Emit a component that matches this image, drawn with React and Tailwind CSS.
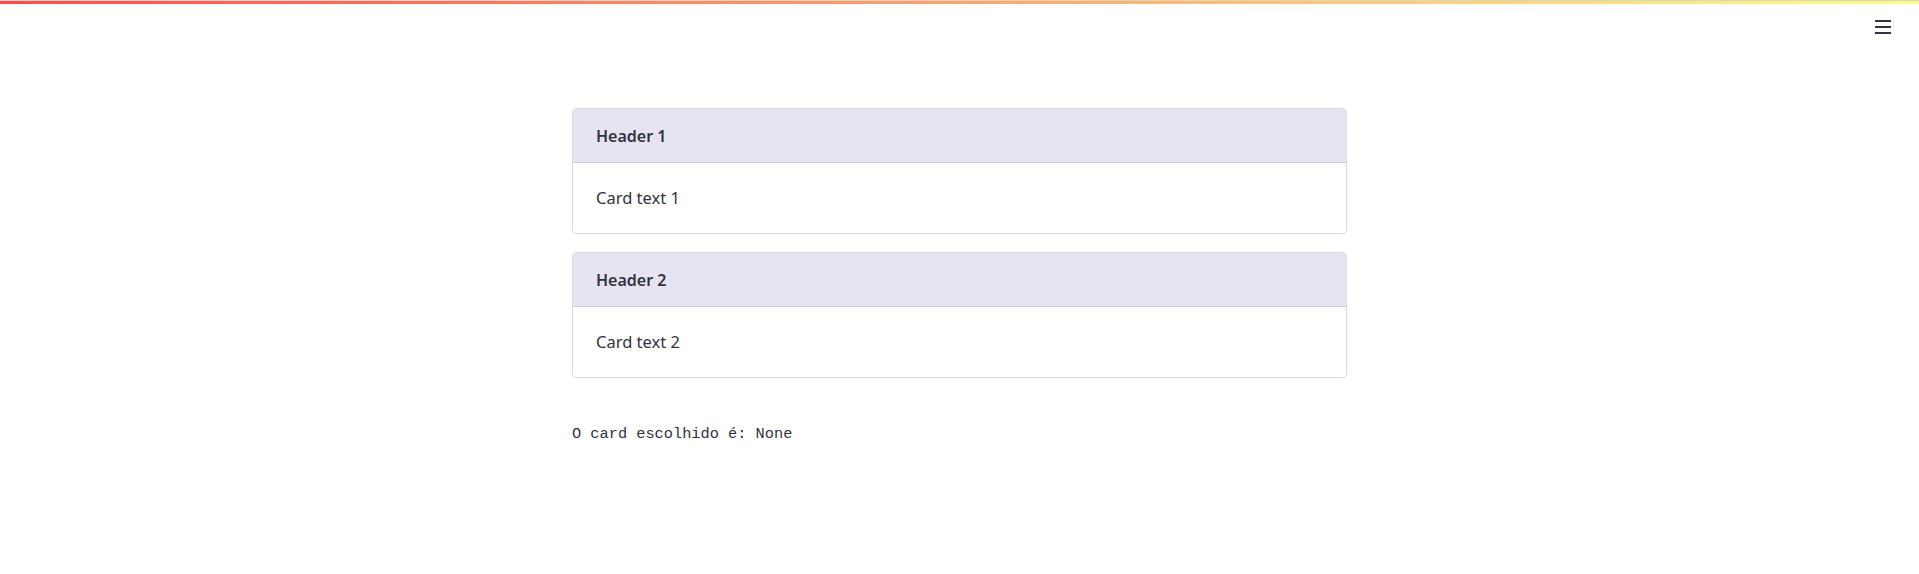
import React from "react";

const cards = [
  { header: "Header 1", text: "Card text 1" },
  { header: "Header 2", text: "Card text 2" },
];

const Card = ({ header, text }) => (
  <div className="w-full rounded-[4px] border border-[#dcdce0] overflow-hidden bg-white">
    <div className="h-[54px] flex items-center px-[23px] bg-[#e7e4f2] border-b border-[#cdc8dd]">
      <h5 className="text-[16px] font-semibold text-[#31333f]">{header}</h5>
    </div>
    <div className="h-[70px] flex items-center px-[23px]">
      <p className="text-[16.5px] text-[#31333f]">{text}</p>
    </div>
  </div>
);

export default function App() {
  return (
    <div className="relative min-h-[574px] bg-white" style={{ fontFamily: '"Noto Sans", "Open Sans", sans-serif' }}>
      {/* top decoration */}
      <div className="h-px bg-[#d4d4d4]" />
      <div className="h-[3px] bg-[linear-gradient(90deg,#ff4b4b,#fffd80)]" />

      {/* menu button */}
      <button className="absolute top-[19px] right-[28px] w-[16px] h-[16px] flex flex-col justify-between py-[1px]">
        <span className="block h-[2px] w-full bg-[#31333f]" />
        <span className="block h-[2px] w-full bg-[#31333f]" />
        <span className="block h-[2px] w-full bg-[#31333f]" />
      </button>

      <main className="mx-auto w-[775px] pt-[104px]">
        <div className="flex flex-col gap-[18px]">
          {cards.map((c) => (
            <Card key={c.header} header={c.header} text={c.text} />
          ))}
        </div>

        <p
          className="mt-[46px] text-[15.3px] text-[#31333f] leading-[20px]"
          style={{ fontFamily: '"Liberation Mono", "DejaVu Sans Mono", monospace' }}
        >
          O card escolhido é: None
        </p>
      </main>
    </div>
  );
}
